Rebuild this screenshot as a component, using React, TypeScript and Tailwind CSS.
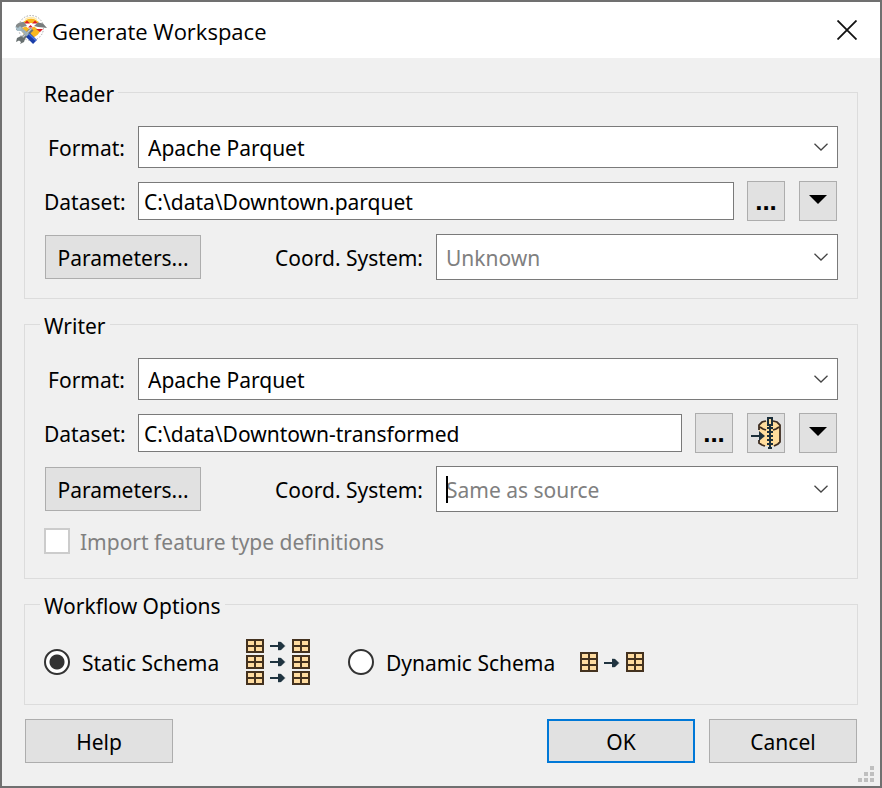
import { useId, useState, type ReactNode } from "react";

function AppIcon() {
  return (
    <svg width="34" height="32" viewBox="0 0 34 32" aria-hidden="true">
      <circle cx="17" cy="14" r="12.500" fill="#fdfdfd" stroke="#a9a9a9" strokeWidth="1" strokeDasharray="1.500 1.500" />
      <circle cx="17" cy="14" r="9.500" fill="#f8b820" />
      <path d="M11 5.500 Q17 1.500 23 5.500" stroke="#ffe9a8" strokeWidth="1.500" fill="none" />
      <path d="M7 9 H27 L29 14 L24 15.500 L20 12.500 L16 15.500 L12 12.500 L8 14Z" fill="#fff" />
      <path d="M10 9.500 l3 -3 l3 3z M18 9.500 l3 -3 l3 3z M14 13.500 h5 l-2.500 -2.500z M22 15 h7 l-3 3z" fill="#dc1c24" />
      <path d="M2 11 Q5 7.500 10 8 L13 12 L9 13 L6 16 L2 16Z" fill="#858a8a" />
      <path d="M20 12 L24 8.500 L29 9.500 L33 14 L29 13.500 L24 13Z" fill="#777b7b" />
      <path d="M1 12 L4 14 L6 12 L8 14 L7 17 L3 17Z" fill="#a8bfca" />
      <path d="M18 15 L7 26" stroke="#6b7374" strokeWidth="4" />
      <path d="M17.500 14.500 L7 25" stroke="#c4cbcb" strokeWidth="1.500" />
      <path d="M7 22 L3 24 L2 28 L5 26.500 L7 28 L6 30 L10 28 L11 25Z" fill="#687070" />
      <path d="M7 15 L15 22" stroke="#9db0ba" strokeWidth="3" />
      <path d="M14 21 L21 28" stroke="#193da8" strokeWidth="5.500" />
      <path d="M15 20 L22 26.500" stroke="#4d78e4" strokeWidth="1.400" />
    </svg>
  );
}

function Chevron() {
  return (
    <svg width="14" height="8" viewBox="0 0 14 8" className="pointer-events-none absolute right-[10px] top-1/2 -translate-y-1/2" aria-hidden="true">
      <path d="M0.500 0.800 L7 7 L13.500 0.800" fill="none" stroke="#444" strokeWidth="1.300" />
    </svg>
  );
}

function DownTriangle() {
  return (
    <svg width="18" height="13" viewBox="0 0 18 13" aria-hidden="true">
      <path d="M0 0 H18 L9 9Z" fill="#000" />
    </svg>
  );
}

function ZipIcon() {
  return (
    <svg width="32" height="34" viewBox="0 0 32 34" className="shrink-0" aria-hidden="true">
      <path d="M9 9 L12 6 L17 5 H23 L28 7 L30 9 V26 L28 28 L23 30 H15 L9 27Z" fill="#ffdc9c" />
      <path d="M16 5 L12 6 L9 9 V14 M23 5 L27 6 L30 9 V26 L28 28 L24 30 M10 11 L13 13 L16 14 M23 14 L26 13 L29 11 M9 24 V27 L12 29 L15 30" fill="none" stroke="#3d2c20" strokeWidth="1.800" />
      <path d="M1 20 H10" stroke="#1c2f3a" strokeWidth="2" />
      <path d="M9 15 L15 20 L9 25Z" fill="#1c2f3a" />
      <path d="M20 9 V33" stroke="#1c2f3a" strokeWidth="2" />
      <path d="M17 12 H23 M17 16 H23 M17 20 H23 M17 24 H23 M17 28 H23 M18 32 H22" stroke="#1c2f3a" strokeWidth="2" />
      <rect x="18" y="2" width="4" height="7" fill="#ffdc9c" stroke="#1c2f3a" strokeWidth="2" />
    </svg>
  );
}

function SchemaTable({ x, y, rows }: { x: number; y: number; rows: number }) {
  return (
    <g>
      <rect x={x} y={y} width="18" height={rows === 2 ? 14 : 20} fill="#44321f" />
      {Array.from({ length: rows }, (_, r) => (
        <g key={r} fill="#ffdca0">
          <rect x={x + 2} y={y + 2 + r * 6} width="6" height="4" />
          <rect x={x + 10} y={y + 2 + r * 6} width="6" height="4" />
        </g>
      ))}
    </g>
  );
}

function SchemaArrow({ y }: { y: number }) {
  return (
    <g fill="#203440">
      <rect x="24" y={y - 1} width="9" height="2" />
      <path d={`M32 ${y - 5} H34 L40 ${y} L34 ${y + 5} H32Z`} fill="#9aa3a8" opacity="0.500" />
      <path d={`M32 ${y - 4} L35 ${y - 4} L39 ${y} L35 ${y + 4} L32 ${y + 4}Z`} />
    </g>
  );
}

function StaticIcon() {
  return (
    <svg width="64" height="46" viewBox="0 0 64 46" aria-hidden="true">
      {[0, 16, 32].map((y) => (
        <g key={y}>
          <SchemaTable x={0} y={y} rows={2} />
          <SchemaArrow y={y + 7} />
          <SchemaTable x={46} y={y} rows={2} />
        </g>
      ))}
    </svg>
  );
}

function DynamicIcon() {
  return (
    <svg width="64" height="20" viewBox="0 0 64 20" aria-hidden="true">
      <SchemaTable x={0} y={0} rows={3} />
      <SchemaArrow y={11} />
      <SchemaTable x={46} y={0} rows={3} />
    </svg>
  );
}

function Group({ title, children }: { title: string; children: ReactNode }) {
  return (
    <fieldset className="mb-[9px] min-w-0 border border-[#dcdcdc] px-[15px] pb-[18px]">
      <legend className="h-8 px-1 pt-1 leading-7">{title}</legend>
      <div className="flex flex-col gap-[13px] pl-1 pr-1 pt-[18px]">{children}</div>
    </fieldset>
  );
}

function Combo({ id, options, height, muted, caret }: { id: string; options: string[]; height: string; muted?: boolean; caret?: boolean }) {
  return (
    <div className="relative min-w-0 flex-1">
      <select id={id} className={`block w-full appearance-none border border-[#7a7a7a] bg-white pl-[9px] pr-8 pt-[2px] outline-none ${height} ${muted ? "text-[#808080]" : "text-black"}`}>
        {options.map((o) => (
          <option key={o}>{o}</option>
        ))}
      </select>
      {caret && <span className="pointer-events-none absolute left-[10px] top-[10px] h-[27px] w-[2px] bg-black" />}
      <Chevron />
    </div>
  );
}

function ToolButton({ label, children }: { label: string; children: ReactNode }) {
  return (
    <button type="button" aria-label={label} className="flex h-10 w-[38px] shrink-0 items-center justify-center border border-[#adadad] bg-[#e1e1e1]">
      {children}
    </button>
  );
}

function Dots() {
  return <span className="font-['Liberation_Sans',sans-serif] text-[26px] leading-8 font-bold">...</span>;
}

const FORMATS = ["Apache Parquet", "CSV", "Esri Shapefile", "GeoJSON"];
const labelClass = "w-[81px] shrink-0 pt-[2px] text-right";
const buttonClass = "h-11 shrink-0 bg-[#e1e1e1] pt-[2px]";

function Connection({ path, coord, caret, archive }: { path: string; coord: string; caret?: boolean; archive?: boolean }) {
  const id = useId();
  const [dataset, setDataset] = useState(path);
  return (
    <>
      <div className="flex items-center gap-[13px]">
        <label htmlFor={`${id}-format`} className={labelClass}>Format:</label>
        <Combo id={`${id}-format`} options={FORMATS} height="h-[42px]" />
      </div>
      <div className="flex items-center gap-[13px]">
        <label htmlFor={`${id}-dataset`} className={labelClass}>Dataset:</label>
        <input
          id={`${id}-dataset`}
          type="text"
          value={dataset}
          onChange={(e) => setDataset(e.target.value)}
          className="h-[38px] min-w-0 flex-1 border border-[#7a7a7a] bg-white px-[5px] pt-[2px] outline-none"
        />
        <div className="mr-px flex gap-[14px]">
          <ToolButton label="Browse"><Dots /></ToolButton>
          {archive && <ToolButton label="Write to zip"><ZipIcon /></ToolButton>}
          <ToolButton label="More sources"><DownTriangle /></ToolButton>
        </div>
      </div>
      <div className="flex items-center gap-[13px]">
        <button type="button" className={`ml-px w-[156px] border border-[#adadad] ${buttonClass}`}>Parameters...</button>
        <label htmlFor={`${id}-coord`} className="w-[209px] shrink-0 pt-[2px] text-right">Coord. System:</label>
        <Combo id={`${id}-coord`} options={[coord]} height="h-[46px]" muted caret={caret} />
      </div>
    </>
  );
}

const radioClass =
  "size-[26px] shrink-0 appearance-none rounded-full border-2 border-[#333] bg-white checked:bg-[radial-gradient(circle,#333_0,#333_7px,#fff_8px)]";

export default function App() {
  const [schema, setSchema] = useState("static");
  return (
    <main className="flex min-h-screen flex-col border-2 border-[#707070] bg-[#f0f0f0] font-['Noto_Sans',sans-serif] text-[21px] leading-7 text-black">
      <header className="flex h-14 items-center bg-white pl-3 pr-[22px]">
        <AppIcon />
        <h1 className="ml-1 flex-1 pt-[2px] font-['Open_Sans',sans-serif] text-[22px]">Generate Workspace</h1>
        <button type="button" aria-label="Close" className="flex size-[22px] items-center justify-center">
          <svg width="20" height="20" viewBox="0 0 20 20" aria-hidden="true">
            <path d="M0.500 0.500 L19.500 19.500 M19.500 0.500 L0.500 19.500" stroke="#111" strokeWidth="1.800" />
          </svg>
        </button>
      </header>

      <form className="relative flex-1 px-[22px] pb-[23px] pt-[18px]" onSubmit={(e) => e.preventDefault()}>
        <Group title="Reader">
          <Connection path="C:\data\Downtown.parquet" coord="Unknown" />
        </Group>

        <Group title="Writer">
          <Connection path="C:\data\Downtown-transformed" coord="Same as source" caret archive />
          <label className="mb-[3px] flex h-8 items-center gap-[10px] text-[#808080]">
            <input type="checkbox" disabled className="size-[26px] shrink-0 appearance-none border-2 border-[#cccccc] bg-white" />
            <span className="pt-[2px]">Import feature type definitions</span>
          </label>
        </Group>

        <Group title="Workflow Options">
          <div className="flex h-12 items-center">
            <label className="flex items-center gap-3">
              <input type="radio" name="schema" checked={schema === "static"} onChange={() => setSchema("static")} className={radioClass} />
              <span className="w-[152px] pt-[2px]">Static Schema</span>
              <StaticIcon />
            </label>
            <label className="ml-[38px] flex items-center gap-3">
              <input type="radio" name="schema" checked={schema === "dynamic"} onChange={() => setSchema("dynamic")} className={radioClass} />
              <span className="w-[182px] pt-[2px]">Dynamic Schema</span>
              <DynamicIcon />
            </label>
          </div>
        </Group>

        <div className="mt-[14px] flex gap-[14px] px-px">
          <button type="button" className={`w-[148px] border border-[#adadad] ${buttonClass}`}>Help</button>
          <button type="submit" className={`ml-auto w-[148px] border-2 border-[#0078d7] ${buttonClass}`}>OK</button>
          <button type="button" className={`w-[148px] border border-[#adadad] ${buttonClass}`}>Cancel</button>
        </div>

        <svg width="16" height="16" viewBox="0 0 16 16" className="absolute bottom-1 right-[6px]" fill="#bfbfbf" aria-hidden="true">
          <path d="M12 0h4v4h-4z M6 6h4v4h-4z M12 6h4v4h-4z M0 12h4v4h-4z M6 12h4v4h-4z M12 12h4v4h-4z" />
        </svg>
      </form>
    </main>
  );
}
